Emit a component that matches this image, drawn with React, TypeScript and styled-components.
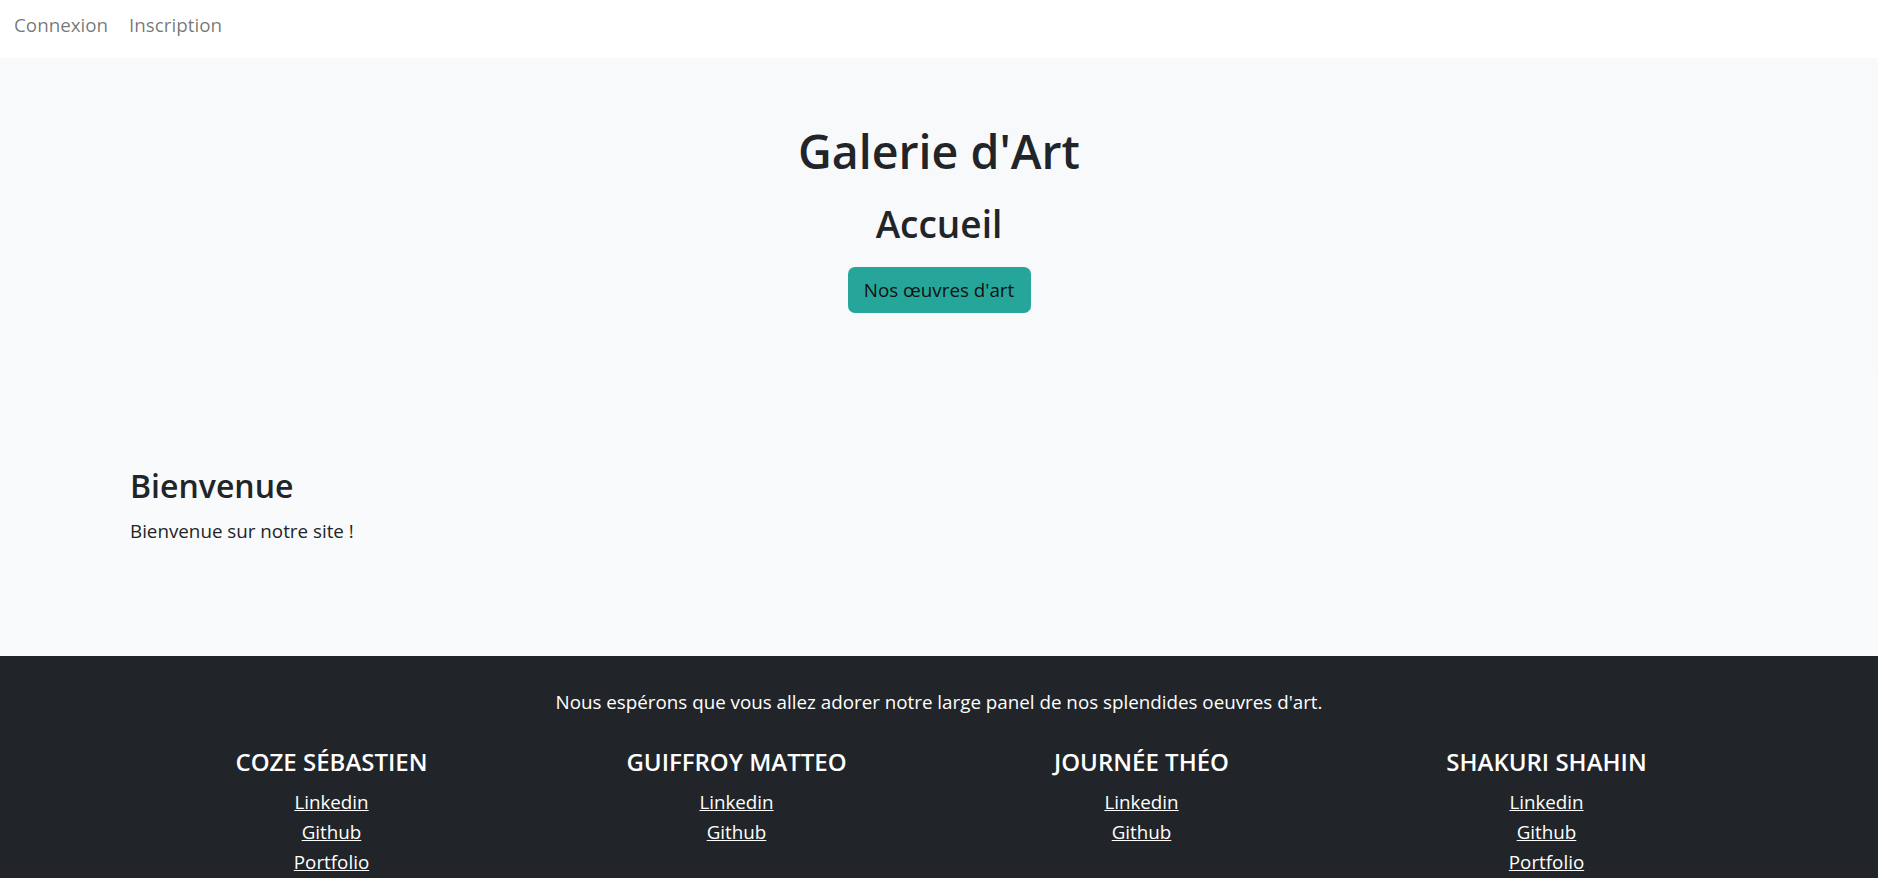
import React from "react";
import styled, { createGlobalStyle } from "styled-components";

const Global = createGlobalStyle`
  html, body { margin: 0; padding: 0; }
  body {
    font-family: "Open Sans", "Noto Sans", sans-serif;
    color: #212529;
    background: #ffffff;
  }
  * { box-sizing: border-box; }
`;

const Page = styled.div`
  display: flex;
  flex-direction: column;
  min-height: 878px;
`;

const Navbar = styled.nav`
  height: 58px;
  background: #ffffff;
  display: flex;
  align-items: flex-start;
  padding: 10px 0 0 14px;
  gap: 21px;
`;

const NavLink = styled.a`
  font-size: 18.8px;
  line-height: 30px;
  color: rgba(0, 0, 0, 0.55);
  text-decoration: none;
`;

const Hero = styled.header`
  height: 315px;
  background: #f8f9fa;
  display: flex;
  flex-direction: column;
  align-items: center;
  padding-top: 66px;
`;

const Title = styled.h1`
  margin: 0;
  font-size: 46.5px;
  font-weight: 600;
  line-height: 1.2;
`;

const SubTitle = styled.h2`
  margin: 22px 0 0;
  font-size: 37px;
  font-weight: 600;
  line-height: 1.2;
`;

const Button = styled.a`
  margin-top: 21px;
  display: inline-flex;
  align-items: center;
  justify-content: center;
  height: 46px;
  width: 183px;
  background: #26a69a;
  border-radius: 7px;
  font-size: 18.8px;
  color: #111111;
  text-decoration: none;
`;

const Main = styled.main`
  height: 283px;
  background: #f9fafb;
  padding: 94px 130px 0;
`;

const SectionTitle = styled.h3`
  margin: 0;
  font-size: 32px;
  font-weight: 600;
  line-height: 1.2;
`;

const Text = styled.p`
  margin: 12px 0 0;
  font-size: 18.8px;
  line-height: 1.5;
`;

const Footer = styled.footer`
  flex: 1;
  background: #212529;
  color: #ffffff;
  padding-top: 32px;
  display: flex;
  flex-direction: column;
  align-items: center;
`;

const FooterText = styled.p`
  margin: 0;
  font-size: 18.8px;
  line-height: 1.5;
  text-align: center;
`;

const Team = styled.div`
  margin-top: 32px;
  width: 1620px;
  display: grid;
  grid-template-columns: repeat(4, 1fr);
`;

const Member = styled.div`
  display: flex;
  flex-direction: column;
  align-items: center;
`;

const MemberName = styled.h5`
  margin: 0 0 10px;
  font-size: 24px;
  font-weight: 600;
  line-height: 1.2;
  text-transform: uppercase;
`;

const FooterLink = styled.a`
  font-size: 18.8px;
  line-height: 30px;
  color: #ffffff;
  text-decoration: underline;
`;

const members = [
  { name: "Coze Sébastien", links: ["Linkedin", "Github", "Portfolio"] },
  { name: "Guiffroy Matteo", links: ["Linkedin", "Github"] },
  { name: "Journée Théo", links: ["Linkedin", "Github"] },
  { name: "Shakuri Shahin", links: ["Linkedin", "Github", "Portfolio"] },
];

export default function App() {
  return (
    <Page>
      <Global />
      <Navbar>
        <NavLink href="#">Connexion</NavLink>
        <NavLink href="#">Inscription</NavLink>
      </Navbar>
      <Hero>
        <Title>Galerie d'Art</Title>
        <SubTitle>Accueil</SubTitle>
        <Button href="#">Nos œuvres d'art</Button>
      </Hero>
      <Main>
        <SectionTitle>Bienvenue</SectionTitle>
        <Text>Bienvenue sur notre site !</Text>
      </Main>
      <Footer>
        <FooterText>
          Nous espérons que vous allez adorer notre large panel de nos splendides oeuvres d'art.
        </FooterText>
        <Team>
          {members.map((m) => (
            <Member key={m.name}>
              <MemberName>{m.name}</MemberName>
              {m.links.map((l) => (
                <FooterLink key={l} href="#">
                  {l}
                </FooterLink>
              ))}
            </Member>
          ))}
        </Team>
      </Footer>
    </Page>
  );
}
